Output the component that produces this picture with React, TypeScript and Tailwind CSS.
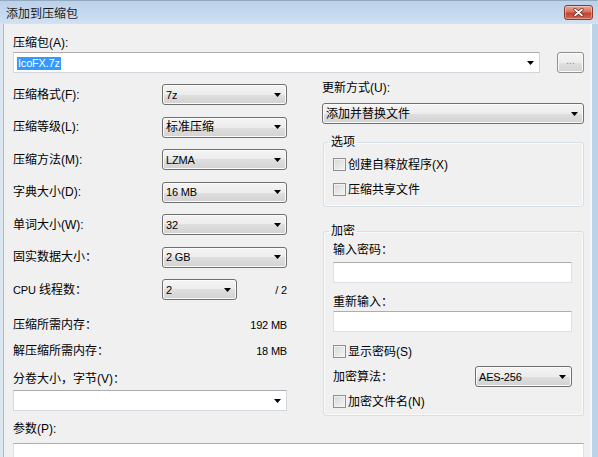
import React from "react";

const FONT = "font-['Liberation_Sans','Noto_Sans_CJK_SC',sans-serif]";

function Arrow() {
  return (
    <svg width="7" height="4" viewBox="0 0 7 4" className="shrink-0">
      <path d="M0 0h7L3.5 4z" fill="#000" />
    </svg>
  );
}

// Latin values are drawn a touch smaller, as in the Windows dialog font
function Latin({ children }: { children: React.ReactNode }) {
  return <span className="text-[11px] tracking-[-0.2px]">{children}</span>;
}

// non-editable dropdown list (button look)
function Select({ value, className = "" }: { value: React.ReactNode; className?: string }) {
  return (
    <div
      className={`flex h-[21px] items-center justify-between rounded-[3px] border border-[#707070] bg-[linear-gradient(#f4f4f4,#ececec_50%,#dfdfdf_50%,#d2d2d2)] pl-[3px] pr-[5px] shadow-[inset_0_0_0_1px_#fbfbfb] ${className}`}
    >
      <span className="truncate">{value}</span>
      <Arrow />
    </div>
  );
}

// editable combo box (white field with arrow)
function Combo({ children, className = "" }: { children?: React.ReactNode; className?: string }) {
  return (
    <div
      className={`flex h-[21px] items-center justify-between border border-[#d2d6dd] border-t-[#abadb3] bg-white pl-[3px] pr-[5px] ${className}`}
    >
      <span>{children}</span>
      <Arrow />
    </div>
  );
}

function TextBox({ className = "" }: { className?: string }) {
  return (
    <div
      className={`h-[21px] border border-[#dbdfe6] border-t-[#abadb3] bg-white ${className}`}
    />
  );
}

function Check({ label }: { label: string }) {
  return (
    <div className="flex h-4 items-center gap-[2px]">
      <span className="h-[13px] w-[13px] shrink-0 border border-[#8f8f8f] bg-[linear-gradient(135deg,#d6d6d6,#f6f6f6)] shadow-[inset_0_0_0_1px_#f2f2f2]" />
      <span>{label}</span>
    </div>
  );
}

function Row({ label, value }: { label: string; value: React.ReactNode }) {
  return (
    <div className="flex h-[21px] items-center justify-between">
      <span>{label}</span>
      <Select value={value} className="w-[125px]" />
    </div>
  );
}

function CloseButton() {
  return (
    <div className="mt-[4px] flex h-[15px] w-[29px] items-center justify-center rounded-[3px] border border-[#8a3a31] bg-[linear-gradient(#eaa999,#d8735f_45%,#c4432f_55%,#d3694f)] shadow-[inset_0_0_0_1px_rgba(255,255,255,0.35)]">
      <svg width="11" height="9" viewBox="0 0 11 9">
        <path d="M2 1.5l7 6M9 1.5l-7 6" stroke="#5a1d15" strokeWidth="3" strokeLinecap="round" />
        <path d="M2 1.5l7 6M9 1.5l-7 6" stroke="#fff" strokeWidth="1.7" strokeLinecap="round" />
      </svg>
    </div>
  );
}

export default function App() {
  return (
    <div className={`h-[457px] w-[598px] overflow-hidden bg-[#c4d7ec] text-[12px] leading-4 text-black ${FONT}`}>
      {/* title bar */}
      <div className="flex h-6 items-start justify-between border-t border-[#93a9c0] bg-[linear-gradient(#bcd2e9,#c8dbef_70%,#d3e2f3)] pl-[6px] pr-[5px]">
        <span className="mt-[5px] text-[#1b1b1b]">添加到压缩包</span>
        <CloseButton />
      </div>

      <div className="flex h-[433px]">
        <div className="w-[4px] border-r border-[#a9b9c9] bg-[#dde7f2]" />

        <div className="flex-1 bg-[#f0f0f0] pl-[9px] pr-[6px] pt-[11px]">
          <div>压缩包(A):</div>
          <div className="mt-px flex justify-between">
            <Combo className="w-[527px]">
              <span className="inline-block bg-[#3399ff] px-px text-[11px] leading-[13px] tracking-[-0.2px] text-white">
                IcoFX.7z
              </span>
            </Combo>
            <div className="flex h-[21px] w-[27px] items-center justify-center rounded-[3px] border border-[#8e8f8f] bg-[linear-gradient(#f4f4f4,#ececec_50%,#e0e0e0_50%,#d4d4d4)] pb-[3px] text-[10px] text-[#8a8a8a] shadow-[inset_0_0_0_1px_#fbfbfb]">
              ...
            </div>
          </div>

          <div className="mt-[7px] flex justify-between">
            {/* left column */}
            <div className="w-[274px] pt-[4px]">
              <div className="flex flex-col gap-[11.5px]">
                <Row label="压缩格式(F):" value={<Latin>7z</Latin>} />
                <Row label="压缩等级(L):" value="标准压缩" />
                <Row label="压缩方法(M):" value={<Latin>LZMA</Latin>} />
                <Row label="字典大小(D):" value={<Latin>16 MB</Latin>} />
                <Row label="单词大小(W):" value={<Latin>32</Latin>} />
                <Row label="固实数据大小：" value={<Latin>2 GB</Latin>} />
                <div className="flex h-[21px] items-center">
                  <span className="w-[149px]">
                    <Latin>CPU</Latin> 线程数：
                  </span>
                  <Select value={<Latin>2</Latin>} className="w-[75px]" />
                  <span className="flex-1 text-right">
                    <Latin>/ 2</Latin>
                  </span>
                </div>
              </div>
              <div className="mt-[16.5px] flex justify-between">
                <span>压缩所需内存：</span>
                <Latin>192 MB</Latin>
              </div>
              <div className="mt-[10.5px] flex justify-between">
                <span>解压缩所需内存：</span>
                <Latin>18 MB</Latin>
              </div>
              <div className="mt-[12px]">分卷大小，字节(V)：</div>
              <Combo className="mt-[3px] w-full" />
            </div>

            {/* right column */}
            <div className="w-[262px]">
              <div>更新方式(U):</div>
              <Select value="添加并替换文件" className="mt-[7px] w-full" />

              <fieldset className="ml-px mt-[10px] rounded-[3px] border border-[#d5dfe5] shadow-[inset_0_0_0_1px_#fafafa]">
                <legend className="ml-[5px] px-[2px]">选项</legend>
                <div className="pb-[8.5px] pl-[9px] pr-[11px]">
                  <div className="mt-[6.5px]">
                    <Check label="创建自释放程序(X)" />
                  </div>
                  <div className="mt-[9px]">
                    <Check label="压缩共享文件" />
                  </div>
                </div>
              </fieldset>

              <fieldset className="ml-px mt-[16px] rounded-[3px] border border-[#d5dfe5] shadow-[inset_0_0_0_1px_#fafafa]">
                <legend className="ml-[5px] px-[2px]">加密</legend>
                <div className="pb-[5.5px] pl-[9px] pr-[11px]">
                  <div className="mt-[3px]">输入密码：</div>
                  <TextBox className="mt-[4px]" />
                  <div className="mt-[10.5px]">重新输入：</div>
                  <TextBox className="mt-[1.5px]" />
                  <div className="mt-[11.5px]">
                    <Check label="显示密码(S)" />
                  </div>
                  <div className="mt-[6.5px] flex h-[21px] items-center justify-between">
                    <span>加密算法：</span>
                    <Select value={<Latin>AES-256</Latin>} className="w-[97px]" />
                  </div>
                  <div className="mt-[6.5px]">
                    <Check label="加密文件名(N)" />
                  </div>
                </div>
              </fieldset>
            </div>
          </div>

          <div className="mt-[5px]">参数(P):</div>
          <TextBox className="mt-[6px] h-[30px]" />
        </div>

        <div className="w-[8px] border-l-2 border-[#f4f8fc] bg-[#bcd2e9]" />
      </div>
    </div>
  );
}
